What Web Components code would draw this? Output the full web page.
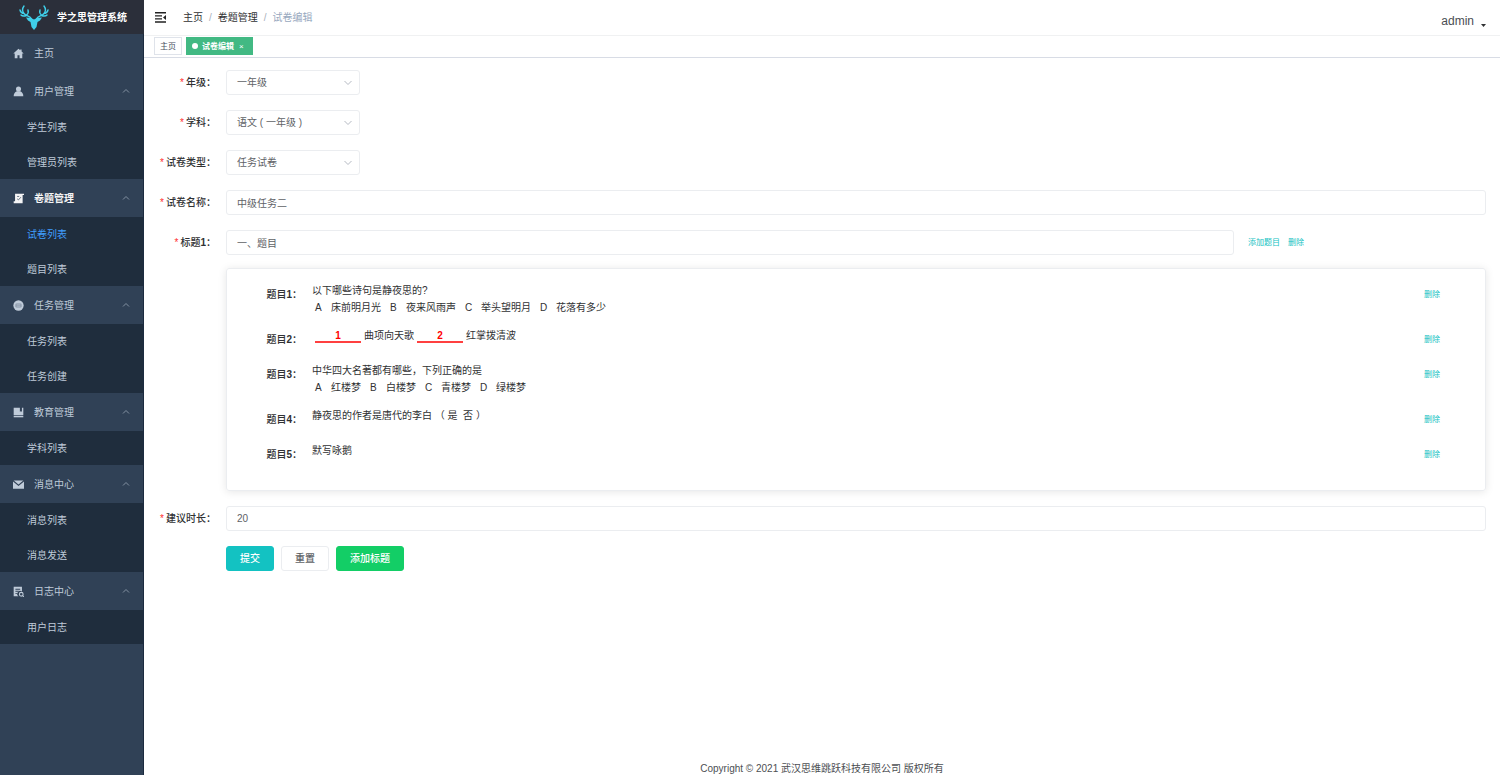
<!DOCTYPE html>
<html lang="zh-CN">
<head>
<meta charset="utf-8">
<title>学之思管理系统</title>
<style>
  * { box-sizing: border-box; }
  body {
    margin: 0;
    min-height: 100vh;
    display: grid;
    grid-template-columns: 144px minmax(0, 1fr);
    font-family: "Liberation Sans", "Noto Sans CJK SC", sans-serif;
    font-size: 10px;
    line-height: 17px;
    color: #303133;
    background: #fff;
    --primary: #13c2c2;
    --success: #13ce66;
    --border: #ebedf0;
  }
  main {
    display: flex;
    flex-direction: column;
    min-width: 0;
  }
  form {
    padding: 12px 14px 15px 0;
    display: flex;
    flex-direction: column;
    gap: 15px;
  }
  .actions {
    display: flex;
    gap: 7px;
    padding-left: 82px;
  }
</style>
</head>
<body>

<side-bar>
  <menu-item icon="home" label="主页"></menu-item>
  <menu-item icon="user" label="用户管理" items="学生列表,管理员列表"></menu-item>
  <menu-item icon="paper" label="卷题管理" items="试卷列表,题目列表" active="试卷列表"></menu-item>
  <menu-item icon="task" label="任务管理" items="任务列表,任务创建"></menu-item>
  <menu-item icon="book" label="教育管理" items="学科列表"></menu-item>
  <menu-item icon="mail" label="消息中心" items="消息列表,消息发送"></menu-item>
  <menu-item icon="log" label="日志中心" items="用户日志"></menu-item>
</side-bar>

<main>
  <nav-bar user="admin"></nav-bar>
  <tags-view></tags-view>

  <form onsubmit="return false">
    <form-field kind="select" label="年级" value="一年级"></form-field>
    <form-field kind="select" label="学科" value="语文 ( 一年级 )"></form-field>
    <form-field kind="select" label="试卷类型" value="任务试卷"></form-field>
    <form-field label="试卷名称" value="中级任务二"></form-field>
    <form-field kind="title" label="标题1" value="一、题目">
      <text-link>添加题目</text-link>
      <text-link>删除</text-link>
    </form-field>

    <question-card>
      <question-item label="题目1">
        以下哪些诗句是静夜思的?
        <option-list slot="options" options="床前明月光,夜来风雨声,举头望明月,花落有多少"></option-list>
      </question-item>
      <question-item label="题目2"><gap-fill>1</gap-fill>曲项向天歌<gap-fill>2</gap-fill>红掌拨清波</question-item>
      <question-item label="题目3">
        中华四大名著都有哪些，下列正确的是
        <option-list slot="options" options="红楼梦,白楼梦,青楼梦,绿楼梦"></option-list>
      </question-item>
      <question-item label="题目4">静夜思的作者是唐代的李白 （ 是 &nbsp;否 ）</question-item>
      <question-item label="题目5">默写咏鹅</question-item>
    </question-card>

    <form-field label="建议时长" value="20"></form-field>

    <div class="actions">
      <app-button type="primary">提交</app-button>
      <app-button>重置</app-button>
      <app-button type="success">添加标题</app-button>
    </div>
  </form>

  <page-footer>Copyright © 2021 武汉思维跳跃科技有限公司 版权所有</page-footer>
</main>

<script>
const icons = {
  home: `<path d="M8 1 0.5 8h2v7h4v-4.500h3V15h4V8h2L12.500 5.200V2h-2v1.300z"/>`,
  user: `<circle cx="8" cy="4.500" r="3.700"/><path d="M5.500 7.500h5c3 1.500 4.500 3.500 4.500 7.500H1c0-4 1.500-6 4.500-7.500z"/>`,
  paper: `<path d="M3 1h13v2h-2v12H1v-3h2z"/><path d="M6 5h3M6 8.500l2 1.500 3.500-4" fill="none" stroke="#304156" stroke-width="1"/>`,
  task: `<circle cx="8" cy="8" r="7.500"/><rect x="3.500" y="5" width="9" height="6" rx="2" fill="#8896a7"/><path d="M5 7h6M5 9h6" stroke="#bfcbd9"/>`,
  book: `<path d="M1 1h9v6l1.500-1L13 7V1h2v11H1z"/><path d="M1 13h14v2H1z"/>`,
  mail: `<path d="M1 2h14l-7 6z"/><path d="M0 3.500 8 10l8-6.500V14H0z"/>`,
  log: `<path fill-rule="evenodd" d="M1 1h12v7a4 4 0 0 0-5 7H1zM3.500 4v1.300h7V4zM3.500 7v1.300h5V7zM3.500 10v1.300h3V10z"/><circle cx="12" cy="12" r="2.700" fill="none" stroke="currentColor" stroke-width="1.600"/><path d="M14 14l2 2" stroke="currentColor" stroke-width="1.500"/>`
};

class BaseElement extends HTMLElement {
  constructor() {
    super();
    this.attachShadow({ mode: "open" });
  }

  connectedCallback() {
    this.shadowRoot.innerHTML = `
      <style>
        * { box-sizing: border-box; }
        a { color: inherit; text-decoration: none; }
        svg { display: block; flex: none; }
      </style>
      ${this.render()}
    `;
  }

  attr(name) {
    return this.getAttribute(name) || "";
  }

  // label text with its number in bold
  labelText() {
    return this.attr("label").replace(/\d+/, "<b>$&</b>") + "：";
  }
}

customElements.define(
  "side-bar",
  class extends BaseElement {
    render() {
      return `
        <style>
          :host {
            display: block;
            background: #304156;
            box-shadow: inset -1px 0 0 #1c2b3f;
          }
          .logo {
            display: flex;
            align-items: center;
            gap: 8px;
            height: 34px;
            padding-left: 19px;
            background: #2b2f3a;
            color: #fff;
            font-weight: bold;
            white-space: nowrap;
          }
        </style>
        <a class="logo" href="#">
          <svg width="30" height="26" viewBox="0 0 30 26" fill="none" stroke="#3fd0ea" stroke-width="1.400" stroke-linecap="round" stroke-linejoin="round">
            <path d="M12.500 15C11 11.500 7.500 12.500 5 9.500 3 7 3.500 4 5 2M5 9.500C2.500 9.300 1.500 8 1 6M7.500 11.500C4.500 12.500 3 12 2 11M7.500 11C9.500 9.500 9.500 7.500 9 6"/>
            <path d="M17.500 15C19 11.500 22.500 12.500 25 9.500 27 7 26.500 4 25 2M25 9.500C27.500 9.300 28.500 8 29 6M22.500 11.500C25.500 12.500 27 12 28 11M22.500 11C20.500 9.500 20.500 7.500 21 6"/>
            <path fill="#3fd0ea" stroke="none" d="M7 13.500 12 14l3 1.500 3-1.500 5-.5-2 3-2.500 1.500L17.500 23 15 26 12.500 23l-1-5L9 16.500z"/>
          </svg>
          <span>学之思管理系统</span>
        </a>
        <nav><slot></slot></nav>
      `;
    }
  }
);

customElements.define(
  "menu-item",
  class extends BaseElement {
    render() {
      const items = this.attr("items").split(",").filter(Boolean);
      const active = this.attr("active");
      const arrow = `<svg class="arrow" width="8" height="8" viewBox="0 0 8 8" fill="none" stroke="#8391a2"><path d="M1 5.500 4 2.500l3 3"/></svg>`;
      return `
        <style>
          :host { display: block; color: #bfcbd9; }
          .head {
            display: flex;
            align-items: center;
            height: 38px;
            padding: 0 14px 0 13px;
          }
          .head.active { color: #f4f4f5; font-weight: bold; }
          .head span { flex: 1; padding: 1px 0 0 10px; }
          ul {
            margin: 0 1px 0 0;
            padding: 0;
            list-style: none;
            background: #1f2d3d;
          }
          li + li { margin-top: 1px; }
          li a { display: block; padding: 2px 0 0 27px; line-height: 32px; }
          li .active { color: #409eff; }
        </style>
        <a class="head ${active ? "active" : ""}" href="#">
          <svg width="11" height="11" viewBox="0 0 16 16" fill="currentColor">${icons[this.attr("icon")]}</svg>
          <span>${this.attr("label")}</span>
          ${items.length ? arrow : ""}
        </a>
        ${items.length ? `<ul>${items.map(t => `<li><a href="#" class="${t === active ? "active" : ""}">${t}</a></li>`).join("")}</ul>` : ""}
      `;
    }
  }
);

customElements.define(
  "nav-bar",
  class extends BaseElement {
    render() {
      return `
        <style>
          :host {
            display: flex;
            align-items: center;
            height: 36px;
            padding: 0 14px 1px 11px;
            border-bottom: 1px solid #f0f1f2;
          }
          button {
            padding: 0;
            border: 0;
            background: none;
            font: inherit;
            color: inherit;
          }
          nav { display: flex; flex: 1; gap: 6px; padding-left: 17px; }
          nav i { color: #a9b0bb; font-style: normal; }
          nav span { color: #97a8be; }
          .user {
            display: flex;
            align-items: center;
            gap: 7px;
            padding-top: 8px;
            font-size: 12px;
            color: #4a4d52;
          }
          .user svg { margin-top: 8px; }
        </style>
        <button aria-label="收起菜单">
          <svg width="11" height="11" viewBox="0 0 11 11" fill="#222"><path d="M0 0h11v1.500H0zM0 3.200h7v1.300H0zM0 6.300h7v1.300H0zM0 9.300h11v1.500H0zM11 3v5L8 5.500z"/></svg>
        </button>
        <nav><a href="#">主页</a><i>/</i><a href="#">卷题管理</a><i>/</i><span>试卷编辑</span></nav>
        <button class="user">${this.attr("user")}
          <svg width="5" height="3" viewBox="0 0 5 3" fill="#303133"><path d="M0 0h5L2.500 3z"/></svg>
        </button>
      `;
    }
  }
);

customElements.define(
  "tags-view",
  class extends BaseElement {
    render() {
      return `
        <style>
          :host {
            display: flex;
            gap: 4px;
            height: 22px;
            padding: 1px 10px 0;
            border-bottom: 1px solid #d8dce5;
            font-size: 8px;
          }
          a {
            display: flex;
            align-items: center;
            height: 18px;
            padding: 0 5px;
            border: 1px solid #dfe3ea;
            color: #495060;
          }
          .active {
            gap: 4px;
            border-color: #42b983;
            background: #42b983;
            color: #fff;
            font-weight: bold;
          }
          .active::before {
            content: "";
            width: 6px;
            height: 6px;
            border-radius: 50%;
            background: #fff;
          }
          b { padding: 0 3px 0 1px; font-weight: normal; }
        </style>
        <a href="#">主页</a>
        <a class="active" href="#">试卷编辑 <b>×</b></a>
      `;
    }
  }
);

customElements.define(
  "form-field",
  class extends BaseElement {
    control() {
      const value = this.attr("value");
      if (this.attr("kind") === "select") {
        return `
          <div class="select">
            <select id="control"><option>${value}</option></select>
            <svg width="8" height="8" viewBox="0 0 8 8" fill="none" stroke="#b4b9c2"><path d="M0.500 2 4 5.500 7.500 2"/></svg>
          </div>
        `;
      }
      return `<input id="control" type="text" value="${value}">`;
    }

    render() {
      const columns = this.attr("kind") === "title" ? "4fr 1fr" : "1fr";
      return `
        <style>
          :host {
            display: grid;
            grid-template-columns: 82px minmax(0, 1fr);
            line-height: 25px;
          }
          label {
            padding-right: 10px;
            text-align: right;
            font-weight: 500;
            white-space: nowrap;
          }
          label::before { content: "*"; margin-right: 2px; color: #ff2d2d; }
          .content { display: grid; grid-template-columns: ${columns}; }
          input, select {
            width: 100%;
            height: 25px;
            padding: 0 10px;
            border: 1px solid var(--border);
            border-radius: 3px;
            background: #fff;
            font: inherit;
            line-height: 23px;
            color: #606266;
            appearance: none;
            outline: 0;
          }
          .select { display: grid; align-items: center; width: 134px; }
          .select > * { grid-area: 1 / 1; }
          .select svg { justify-self: end; margin-right: 8px; pointer-events: none; }
          .links { display: flex; gap: 8px; padding-left: 14px; }
        </style>
        <label for="control">${this.labelText()}</label>
        <div class="content">
          ${this.control()}
          ${this.attr("kind") === "title" ? `<div class="links"><slot></slot></div>` : ""}
        </div>
      `;
    }
  }
);

customElements.define(
  "text-link",
  class extends BaseElement {
    render() {
      return `
        <style>
          :host { display: block; font-size: 8px; line-height: 25px; color: var(--primary); white-space: nowrap; }
        </style>
        <a href="#"><slot></slot></a>
      `;
    }
  }
);

customElements.define(
  "question-card",
  class extends BaseElement {
    render() {
      return `
        <style>
          :host {
            display: flex;
            flex-direction: column;
            gap: 10px;
            margin: -2px 0 0 82px;
            padding: 13px 45px 23px 0;
            border: 1px solid var(--border);
            border-radius: 3px;
            box-shadow: 0 1px 8px rgba(0, 0, 0, 0.1);
          }
        </style>
        <slot></slot>
      `;
    }
  }
);

customElements.define(
  "question-item",
  class extends BaseElement {
    render() {
      return `
        <style>
          :host {
            display: grid;
            grid-template-columns: 85px minmax(0, 1fr) auto;
            min-height: 25px;
          }
          .label {
            padding-right: 10px;
            line-height: 25px;
            text-align: right;
            font-weight: 500;
          }
          .body { padding-bottom: 1px; }
        </style>
        <div class="label">${this.labelText()}</div>
        <div class="body">
          <slot></slot>
          <slot name="options"></slot>
        </div>
        <text-link>删除</text-link>
      `;
    }
  }
);

customElements.define(
  "option-list",
  class extends BaseElement {
    render() {
      const rows = this.attr("options").split(",");
      return `
        <style>
          :host { display: flex; gap: 9px; padding-left: 3px; }
          span { display: flex; gap: 9px; }
          i { width: 7px; font-style: normal; }
        </style>
        ${rows.map((text, n) => `<span><i>${"ABCD"[n]}</i>${text}</span>`).join("")}
      `;
    }
  }
);

customElements.define(
  "gap-fill",
  class extends BaseElement {
    render() {
      return `
        <style>
          :host {
            display: inline-block;
            width: 46px;
            height: 16px;
            margin: 0 3px;
            border-bottom: 2px solid #ff4040;
            text-align: center;
            font-weight: bold;
            color: #f00;
          }
        </style>
        <slot></slot>
      `;
    }
  }
);

customElements.define(
  "app-button",
  class extends BaseElement {
    render() {
      return `
        <style>
          :host { display: block; }
          button {
            height: 25px;
            padding: 0 13px;
            border: 1px solid var(--border);
            border-radius: 3px;
            background: #fff;
            font: inherit;
            font-weight: 500;
            color: #606266;
          }
          .primary { border-color: var(--primary); background: var(--primary); color: #fff; }
          .success { border-color: var(--success); background: var(--success); color: #fff; }
        </style>
        <button class="${this.attr("type")}"><slot></slot></button>
      `;
    }
  }
);

customElements.define(
  "page-footer",
  class extends BaseElement {
    render() {
      return `
        <style>
          :host {
            display: block;
            margin-top: auto;
            line-height: 12px;
            text-align: center;
            color: #4d4f53;
          }
        </style>
        <slot></slot>
      `;
    }
  }
);
</script>
</body>
</html>
